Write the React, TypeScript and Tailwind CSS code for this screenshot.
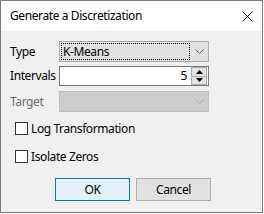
import React from "react";

const font = { fontFamily: '"Noto Sans", "Open Sans", sans-serif' };

function Chevron({ color }: { color: string }) {
  return (
    <svg width="9" height="5" viewBox="0 0 9 5" className="block">
      <polyline points="0.5,0.5 4.5,4.5 8.5,0.5" fill="none" stroke={color} strokeWidth="1" />
    </svg>
  );
}

function Check({ label }: { label: string }) {
  return (
    <div className="flex h-[13px] items-center pl-[14px]">
      <div className="h-[13px] w-[13px] border border-[#333333] bg-white" />
      <span className="ml-[3px] text-[12px] leading-none text-black">{label}</span>
    </div>
  );
}

export default function App() {
  return (
    <div className="h-[214px] w-[264px] bg-white tracking-[-0.4px]" style={font}>
      <div className="flex h-[213px] w-[263px] flex-col border border-[#7a7a7a] bg-[#f0f0f0]">
        <div className="flex h-[30px] shrink-0 items-center justify-between bg-white pl-[9px] pr-[9px]">
          <span className="text-[12px] text-black">Generate a Discretization</span>
          <svg width="11" height="11" viewBox="0 0 11 11">
            <path d="M0.5 0.5 L10.5 10.5 M10.5 0.5 L0.5 10.5" stroke="#000" strokeWidth="1" />
          </svg>
        </div>

        <div className="flex flex-col pt-[10px] text-[12px] text-black">
          <div className="flex h-[21px] items-center">
            <span className="w-[58px] pl-[9px]">Type</span>
            <div className="flex h-[21px] w-[150px] items-center border border-[#adadad] bg-[#e1e1e1]">
              <div className="ml-[1px] flex h-[17px] w-[129px] items-center border border-dotted border-black pl-[1px] leading-none">
                K-Means
              </div>
              <div className="ml-[5px]">
                <Chevron color="#606060" />
              </div>
            </div>
          </div>

          <div className="mt-[4px] flex h-[20px] items-center">
            <span className="w-[58px] pl-[9px]">Intervals</span>
            <div className="flex h-[20px] w-[150px] items-stretch border border-[#7a7a7a] bg-white">
              <div className="flex flex-1 items-center justify-end pr-[4px] leading-none">5</div>
              <div className="mr-[1px] flex w-[16px] flex-col">
                <div className="flex flex-1 items-center justify-center border border-[#adadad] bg-[#e1e1e1]">
                  <svg width="7" height="4" viewBox="0 0 7 4"><polygon points="3.5,0 7,4 0,4" fill="#000" /></svg>
                </div>
                <div className="flex flex-1 items-center justify-center border border-t-0 border-[#adadad] bg-[#e1e1e1]">
                  <svg width="7" height="4" viewBox="0 0 7 4"><polygon points="0,0 7,0 3.5,4" fill="#000" /></svg>
                </div>
              </div>
            </div>
          </div>

          <div className="mt-[5px] flex h-[21px] items-center">
            <span className="w-[58px] pl-[9px] text-[#6d6d6d]">Target</span>
            <div className="flex h-[21px] w-[150px] items-center justify-end border border-[#bfbfbf] bg-[#cccccc] pr-[4px]">
              <Chevron color="#a8a8a8" />
            </div>
          </div>

          <div className="mt-[10px] flex flex-col gap-[15px]">
            <Check label="Log Transformation" />
            <Check label="Isolate Zeros" />
          </div>

          <div className="mt-[15px] flex gap-[6px] pl-[54px]">
            <div className="flex h-[23px] w-[75px] items-center justify-center border border-[#0078d7] bg-[#e5f1fb]">
              OK
            </div>
            <div className="flex h-[23px] w-[75px] items-center justify-center border border-[#adadad] bg-[#e1e1e1]">
              Cancel
            </div>
          </div>
        </div>
      </div>
    </div>
  );
}
